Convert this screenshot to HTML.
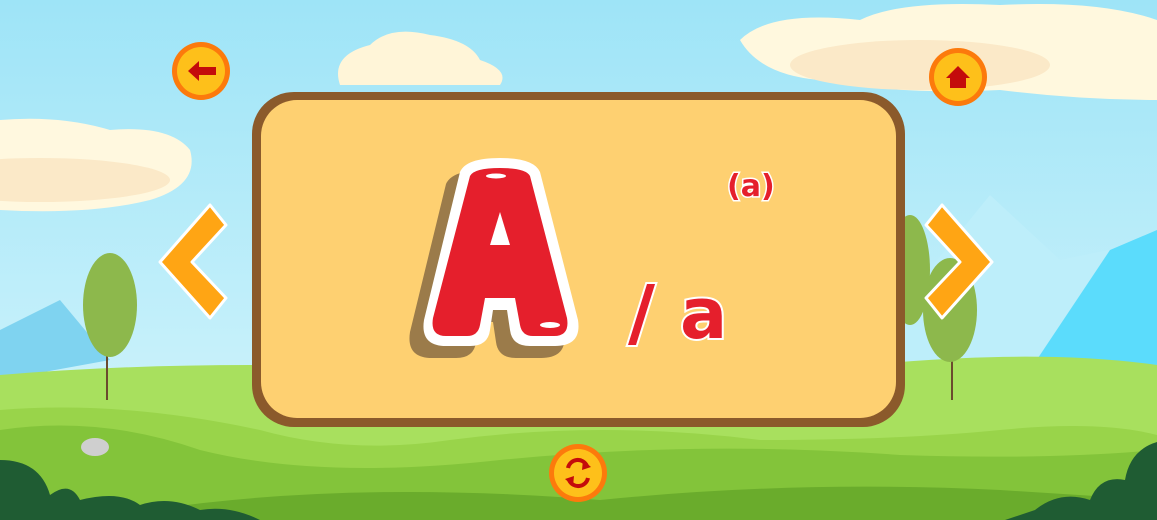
<!DOCTYPE html><html><head><style>body{margin:0;width:1157px;height:520px;overflow:hidden}svg{display:block}</style></head><body>
<svg width="1157" height="520" viewBox="0 0 1157 520" xmlns="http://www.w3.org/2000/svg">
<defs>
<linearGradient id="sky" x1="0" y1="0" x2="0" y2="1"><stop offset="0" stop-color="#9ee4f7"/><stop offset="1" stop-color="#d8f6fc"/></linearGradient>
</defs>
<rect width="1157" height="520" fill="url(#sky)"/>
<path d="M0 330 L60 300 L110 360 L0 380Z" fill="#7fd3f0"/>
<path d="M880 330 L990 195 L1060 260 L1157 240 L1157 370 L860 370Z" fill="#bdeefa"/>
<path d="M1030 370 L1110 250 L1157 230 L1157 370Z" fill="#5bdcfc"/>
<path d="M740 40 Q770 10 860 20 Q900 0 1000 5 Q1100 0 1157 20 L1157 100 Q1080 100 1000 90 Q900 95 820 80 Q760 75 740 40Z" fill="#fff8de"/>
<ellipse cx="920" cy="65" rx="130" ry="25" fill="#fbe9c8"/>
<path d="M340 85 Q330 55 370 45 Q390 25 430 35 Q470 40 480 60 Q510 70 500 85Z" fill="#fff5d8"/>
<path d="M0 120 Q60 115 110 130 Q170 125 190 150 Q200 185 150 200 Q90 215 0 210Z" fill="#fff8df"/>
<ellipse cx="40" cy="180" rx="130" ry="22" fill="#fbe9c8"/>
<path d="M0 375 Q200 358 450 370 Q700 385 900 362 Q1050 350 1157 365 L1157 520 L0 520Z" fill="#a8e05e"/>
<path d="M0 410 Q120 400 260 430 Q350 455 450 440 Q600 420 760 440 Q900 440 1000 430 Q1100 420 1157 435 L1157 520 L0 520Z" fill="#99d44a"/>
<path d="M0 430 Q100 415 200 450 Q320 480 500 460 Q700 440 900 455 Q1050 460 1157 450 L1157 520 L0 520Z" fill="#83c43a"/>
<path d="M150 510 Q350 480 600 500 Q800 480 1000 490 L1157 500 L1157 520 L150 520Z" fill="#6aac2c"/>
<path d="M0 460 Q40 460 50 495 Q70 480 80 500 Q120 490 140 505 Q170 495 200 510 Q230 505 260 520 L0 520Z" fill="#1f5c33"/>
<path d="M1157 442 Q1130 450 1125 480 Q1100 475 1090 500 Q1060 490 1035 510 L1005 520 L1157 520Z" fill="#1f5c33"/>
<ellipse cx="95" cy="447" rx="14" ry="9" fill="#cfcfcf"/>
<line x1="107" y1="340" x2="107" y2="400" stroke="#6b4a2e" stroke-width="2"/>
<ellipse cx="110" cy="305" rx="27" ry="52" fill="#8db84c"/>
<line x1="952" y1="345" x2="952" y2="400" stroke="#6b4a2e" stroke-width="2"/>
<ellipse cx="950" cy="310" rx="27" ry="52" fill="#8db84c"/>
<ellipse cx="910" cy="270" rx="20" ry="55" fill="#8db84c"/>
<rect x="252" y="92" width="653" height="335" rx="42" fill="#8b5a2b"/>
<rect x="261" y="100" width="635" height="318" rx="36" fill="#fed071"/>
<!-- A -->
<g transform="translate(-14,12)">
<path d="M460 172 Q466 158 500 158 Q534 158 540 172 L578 320 Q582 346 555 346 L530 346 Q512 346 510 330 L507 310 L493 310 L490 330 Q488 346 470 346 L446 346 Q420 346 424 320Z" fill="#9b7b4a"/>
</g>
<path d="M460 172 Q466 158 500 158 Q534 158 540 172 L578 320 Q582 346 555 346 L530 346 Q512 346 510 330 L507 310 L493 310 L490 330 Q488 346 470 346 L446 346 Q420 346 424 320Z" fill="#fff"/>
<path d="M470 176 Q474 168 500 168 Q526 168 530 176 L567 318 Q570 336 554 336 L533 336 Q522 336 520 325 L515 298 L485 298 L480 325 Q478 336 467 336 L446 336 Q430 336 433 318Z" fill="#e51f2c"/>
<path d="M490 245 L500 212 L510 245Z" fill="#fff"/>
<ellipse cx="496" cy="176" rx="10" ry="2.5" fill="#fff"/>
<ellipse cx="550" cy="325" rx="10" ry="3" fill="#fff"/>
<text x="727" y="196" font-family="DejaVu Sans,sans-serif" font-weight="bold" font-size="30" fill="#e51f2c" stroke="#fff" stroke-width="3" paint-order="stroke">(a)</text>
<text x="628" y="338" font-family="DejaVu Sans,sans-serif" font-weight="bold" font-size="74" fill="#e51f2c" stroke="#fff" stroke-width="4" paint-order="stroke">/</text>
<text x="680" y="338" font-family="DejaVu Sans,sans-serif" font-weight="bold" font-size="70" fill="#e51f2c" stroke="#fff" stroke-width="4" paint-order="stroke">a</text>
<path d="M210 205 L226 225 L192 262 L226 298 L210 318 L160 262Z" fill="#ffa514" stroke="#fff" stroke-width="3" stroke-linejoin="round"/>
<path d="M942 205 L926 225 L960 262 L926 298 L942 318 L992 262Z" fill="#ffa514" stroke="#fff" stroke-width="3" stroke-linejoin="round"/>
<g><circle cx="201" cy="71" r="29" fill="#fc7a0c"/><circle cx="201" cy="71" r="24" fill="#fec01a"/>
<path d="M188 71 L199 61 L199 67 L216 67 L216 75 L199 75 L199 81Z" fill="#c40b0b"/></g>
<g><circle cx="958" cy="77" r="29" fill="#fc7a0c"/><circle cx="958" cy="77" r="24" fill="#fec01a"/>
<path d="M946 78 L958 66 L970 78 L966 78 L966 88 L950 88 L950 78Z" fill="#c40b0b"/></g>
<g><circle cx="578" cy="473" r="29" fill="#fc7a0c"/><circle cx="578" cy="473" r="24" fill="#fec01a"/>
<path d="M568 468 A10 10 0 0 1 587 466" fill="none" stroke="#c40b0b" stroke-width="4"/><path d="M583 460 L591 467 L582 470Z" fill="#c40b0b"/>
<path d="M588 478 A10 10 0 0 1 569 480" fill="none" stroke="#c40b0b" stroke-width="4"/><path d="M573 486 L565 479 L574 476Z" fill="#c40b0b"/></g>
</svg></body></html>
